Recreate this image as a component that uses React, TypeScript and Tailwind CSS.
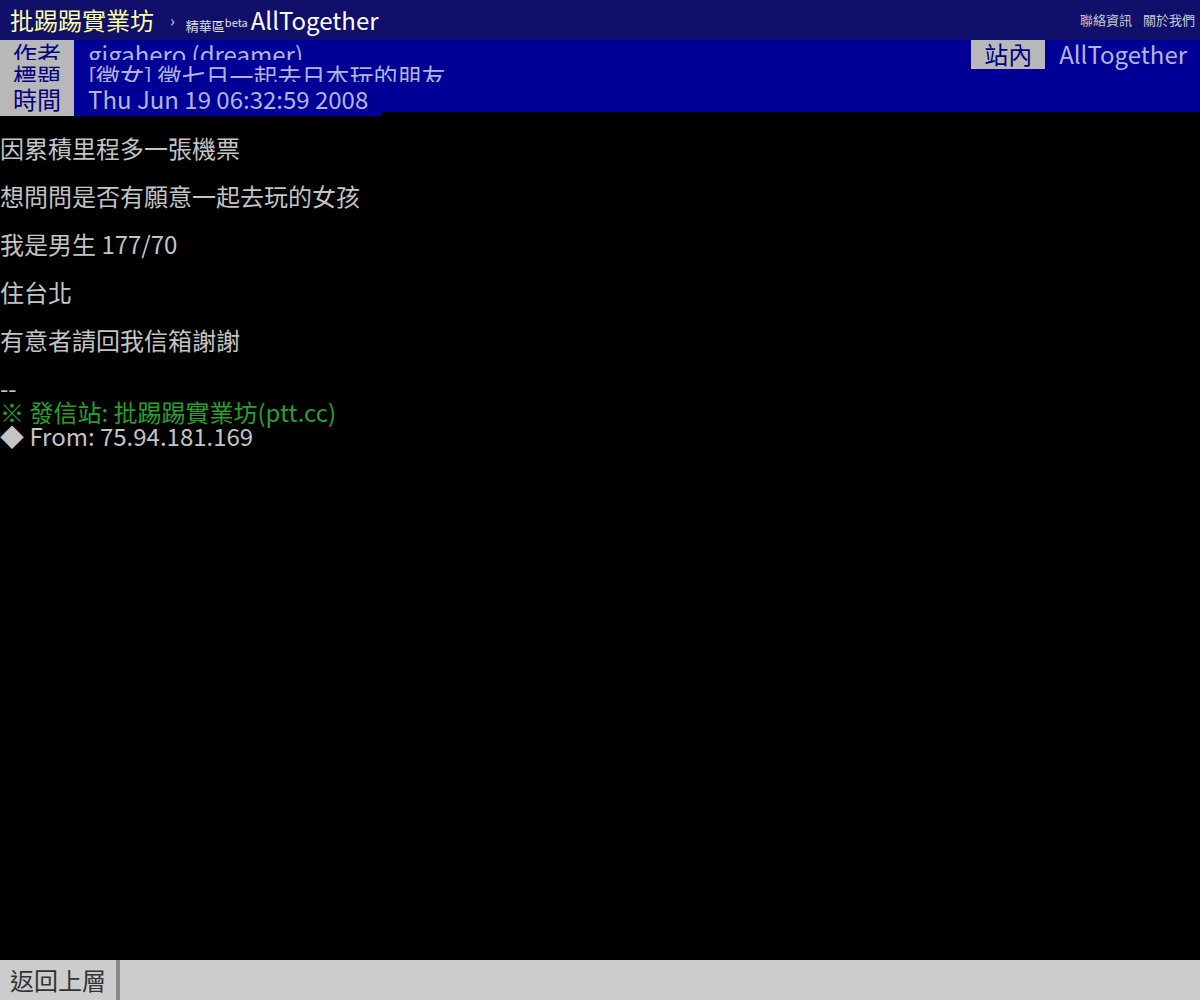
const font = { fontFamily: '"Noto Sans CJK TC", "Noto Sans", sans-serif' };

function MetaRow({ tag, value, rowClass }: { tag: string; value: string; rowClass: string }) {
  return (
    <div className={`flex ${rowClass}`}>
      <span className="shrink-0 bg-[#b8b8b8] px-[13px] text-[#000080]">{tag}</span>
      <span className="bg-[#000096] pl-[14px] pr-[13px] text-[#b4b4de] whitespace-nowrap">{value}</span>
    </div>
  );
}

export default function App() {
  const lines = [
    "",
    "因累積里程多一張機票",
    "",
    "想問問是否有願意一起去玩的女孩",
    "",
    "我是男生 177/70",
    "",
    "住台北",
    "",
    "有意者請回我信箱謝謝",
    "",
    "--",
  ];

  return (
    <div className="flex h-screen flex-col bg-black" style={font}>
      {/* top bar */}
      <div className="flex h-[40px] shrink-0 items-center bg-[#10106b] pl-[10px] pr-[5px]">
        <span className="text-[24px] leading-none text-[#ffffa0]">批踢踢實業坊</span>
        <span className="ml-[16px] text-[16px] text-[#c8c8d8]">›</span>
        <span className="ml-[11px] mt-[12px] text-[13px] text-[#e0e0e0]">精華區</span>
        <span className="mt-[4px] text-[11px] text-[#e0e0e0]">beta</span>
        <span className="ml-[3px] text-[24px] leading-none text-white">AllTogether</span>
        <div className="ml-auto flex gap-[11px] text-[13px] text-[#c8c8d0]">
          <span>聯絡資訊</span>
          <span>關於我們</span>
        </div>
      </div>

      <div className="relative h-[72px] shrink-0 bg-[#000096] text-[24px]">
        <MetaRow tag="作者" value="gigahero (dreamer)" rowClass="h-[20px] overflow-hidden leading-[27px]" />
        <MetaRow tag="標題" value="[徵女] 徵七日一起去日本玩的朋友" rowClass="h-[22px] overflow-hidden leading-[31px]" />
        <MetaRow tag="時間" value="Thu Jun 19 06:32:59 2008" rowClass="h-[34px] overflow-hidden leading-[33px]" />
        <div className="absolute right-0 top-0 flex h-[29px]">
          <span className="bg-[#b8b8b8] px-[13px] text-[#000080] leading-[27px]">站內</span>
          <span className="pl-[14px] pr-[13px] text-[#b4b4de] leading-[27px]">AllTogether</span>
        </div>
      </div>

      {/* content */}
      <div className="flex-1 text-[24px] leading-[24px] text-[#c4c4c4]">
        {lines.map((l, i) => (
          <div key={i} className="h-[24px] whitespace-pre">
            {l}
          </div>
        ))}
        <div className="h-[24px] text-[#2aa02a]">※ 發信站: 批踢踢實業坊(ptt.cc)</div>
        <div className="h-[24px]">◆ From: 75.94.181.169</div>
      </div>

      {/* bottom bar */}
      <div className="flex h-[40px] shrink-0 bg-[#cccccc]">
        <div className="flex items-center border-r-4 border-[#8a8a8a] px-[10px] text-[24px] text-[#333]">
          返回上層
        </div>
      </div>
    </div>
  );
}
